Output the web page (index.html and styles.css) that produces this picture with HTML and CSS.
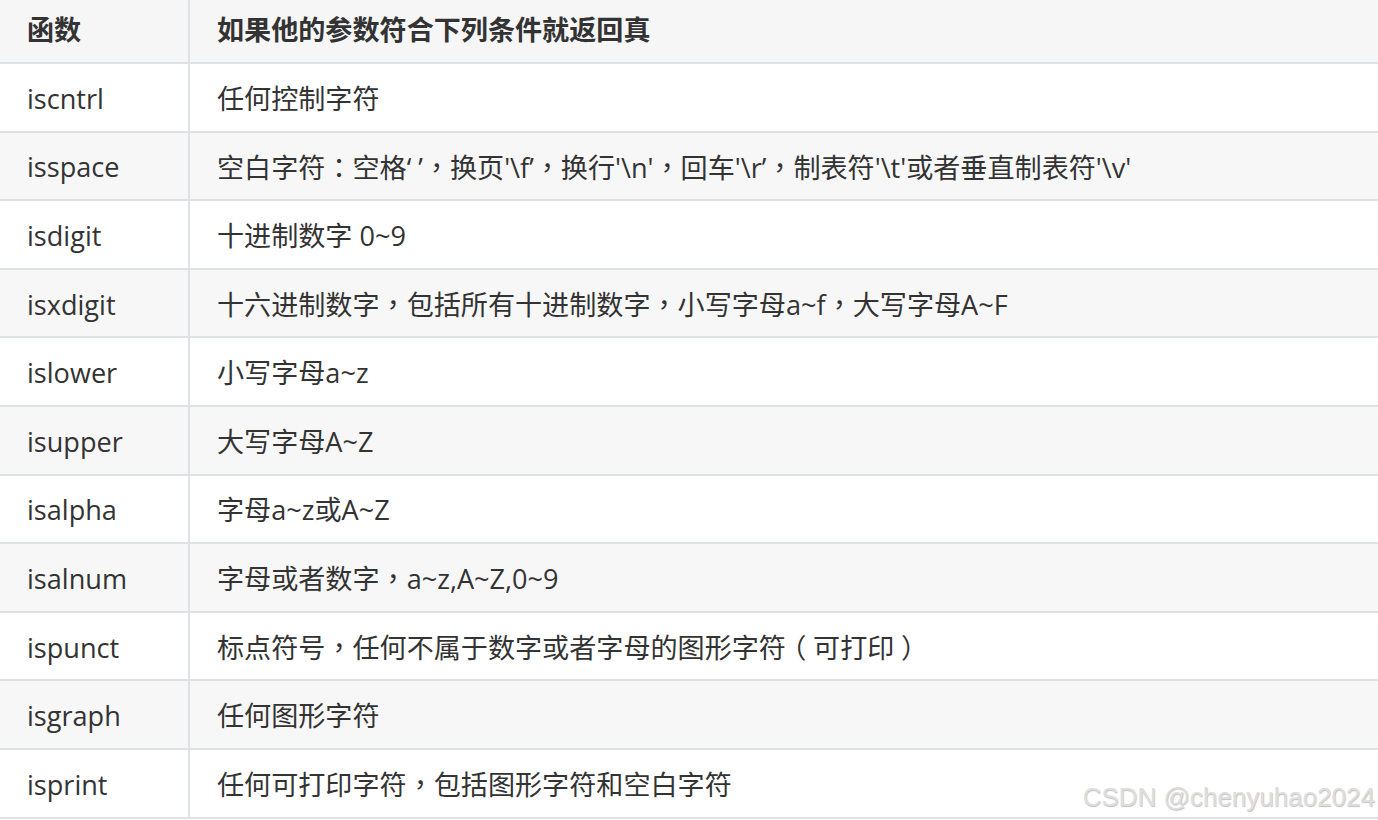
FILE: index.html
```html
<!DOCTYPE html>
<html lang="zh-CN">
<head>
<meta charset="utf-8">
<title>字符分类函数</title>
<link rel="stylesheet" href="styles.css">
</head>
<body>
<div class="page">
<table class="ctype">
  <thead>
    <tr class="head"><th class="fn">函数</th><th class="desc">如果他的参数符合下列条件就返回真</th></tr>
  </thead>
  <tbody>
    <tr><td class="fn">iscntrl</td><td class="desc">任何控制字符</td></tr>
    <tr class="alt"><td class="fn">isspace</td><td class="desc">空白字符<span class="p" lang="zh-Hant">：</span>空格‘ ’<span class="p" lang="zh-Hant">，</span>换页'\f’<span class="p" lang="zh-Hant">，</span>换行'\n'<span class="p" lang="zh-Hant">，</span>回车'\r’<span class="p" lang="zh-Hant">，</span>制表符'\t'或者垂直制表符'\v'</td></tr>
    <tr><td class="fn">isdigit</td><td class="desc">十进制数字 0~9</td></tr>
    <tr class="alt"><td class="fn">isxdigit</td><td class="desc">十六进制数字<span class="p" lang="zh-Hant">，</span>包括所有十进制数字<span class="p" lang="zh-Hant">，</span>小写字母a~f<span class="p" lang="zh-Hant">，</span>大写字母A~F</td></tr>
    <tr><td class="fn">islower</td><td class="desc">小写字母a~z</td></tr>
    <tr class="alt"><td class="fn">isupper</td><td class="desc">大写字母A~Z</td></tr>
    <tr><td class="fn">isalpha</td><td class="desc">字母a~z或A~Z</td></tr>
    <tr class="alt"><td class="fn">isalnum</td><td class="desc">字母或者数字<span class="p" lang="zh-Hant">，</span>a~z,A~Z,0~9</td></tr>
    <tr><td class="fn">ispunct</td><td class="desc">标点符号<span class="p" lang="zh-Hant">，</span>任何不属于数字或者字母的图形字符<span class="pp">（</span>可打印<span class="pp">）</span></td></tr>
    <tr class="alt"><td class="fn">isgraph</td><td class="desc">任何图形字符</td></tr>
    <tr><td class="fn">isprint</td><td class="desc">任何可打印字符<span class="p" lang="zh-Hant">，</span>包括图形字符和空白字符</td></tr>
  </tbody>
</table>
<div class="watermark">CSDN @chenyuhao2024</div>
</div>
</body>
</html>
```

FILE: styles.css
```css
html, body {
  margin: 0;
  padding: 0;
  background: #ffffff;
}

.page {
  position: relative;
  width: 1378px;
  height: 820px;
  overflow: hidden;
}

.ctype {
  width: 1378px;
  border-collapse: separate;
  border-spacing: 0;
  font-family: "Open Sans", "Noto Sans CJK SC", sans-serif;
  font-size: 27.1px;
  color: #333333;
  table-layout: fixed;
}

.ctype tr {
  height: 68.6px;
}

.ctype tr.head {
  height: 64px;
}

.ctype th,
.ctype td {
  text-align: left;
  vertical-align: middle;
  border-bottom: 2px solid #dfe2e5;
  white-space: nowrap;
  line-height: 30px;
}

.ctype th {
  font-weight: 700;
  background: #f6f6f6;
  padding: 0 0 3px 27px;
}

.ctype td {
  font-weight: 400;
  padding: 3px 0 0 27px;
}

.ctype .fn {
  width: 161px;
  border-right: 2px solid #dfe2e5;
}

.ctype .desc {
  padding-left: 27px;
}

.ctype tr.alt td {
  background: #f7f7f7;
}

.p {
  font-family: "Noto Sans CJK TC", "Noto Sans CJK SC", sans-serif;
}

.pp {
  font-family: "Noto Sans CJK SC", sans-serif;
  font-feature-settings: "halt" 1;
  padding: 0 0.25em;
}

.watermark {
  position: absolute;
  right: 3px;
  top: 781px;
  font-family: "Liberation Sans", Arial, sans-serif;
  font-size: 26px;
  line-height: 32px;
  color: #dedede;
  text-shadow: 0.6px 0.6px 1px rgba(0, 0, 0, 0.25);
}
```
